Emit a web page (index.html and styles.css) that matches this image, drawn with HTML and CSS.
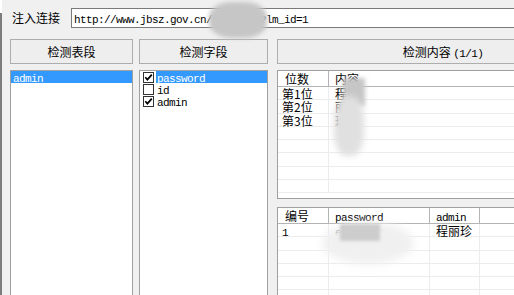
FILE: index.html
```html
<!DOCTYPE html>
<html lang="zh-CN">
<head>
    <meta charset="UTF-8">
    <meta name="viewport" content="width=device-width, initial-scale=1.0">
    <title>注入检测</title>
    <link rel="stylesheet" href="styles.css">
</head>
<body>
    <div class="frame">
        <div class="edge">
            <div class="edge-top"></div>
            <div class="edge-body"></div>
        </div>
        <div class="main">
            <div class="url-row">
                <label class="url-label">注入连接</label>
                <div class="url-box"><span class="en">http://www.jbsz.gov.cn/read.asp?lm_id=1</span></div>
            </div>
            <div class="panels">
                <div class="col col-table">
                    <div class="btn">检测表段</div>
                    <div class="listbox">
                        <div class="item sel"><span class="en">admin</span></div>
                    </div>
                </div>
                <div class="col col-field">
                    <div class="btn">检测字段</div>
                    <div class="listbox">
                        <div class="check-item">
                            <svg class="chk" width="11" height="11" viewBox="0 0 11 11"><rect x="0.5" y="0.5" width="10" height="10" fill="#fff" stroke="#333"/><path d="M2.3 5.2 L4.4 7.6 L8.8 2.6" fill="none" stroke="#000" stroke-width="1.7"/></svg>
                            <span class="item-text sel"><span class="en">password</span></span>
                        </div>
                        <div class="check-item">
                            <svg class="chk" width="11" height="11" viewBox="0 0 11 11"><rect x="0.5" y="0.5" width="10" height="10" fill="#fff" stroke="#333"/></svg>
                            <span class="item-text"><span class="en">id</span></span>
                        </div>
                        <div class="check-item">
                            <svg class="chk" width="11" height="11" viewBox="0 0 11 11"><rect x="0.5" y="0.5" width="10" height="10" fill="#fff" stroke="#333"/><path d="M2.3 5.2 L4.4 7.6 L8.8 2.6" fill="none" stroke="#000" stroke-width="1.7"/></svg>
                            <span class="item-text"><span class="en">admin</span></span>
                        </div>
                    </div>
                </div>
                <div class="col col-content">
                    <div class="btn">检测内容 <span class="en">(1/1)</span></div>
                    <div class="listview lv-top">
                        <div class="lv-head">
                            <div class="hc w1">位数</div>
                            <div class="hc wide">内容</div>
                        </div>
                        <div class="lv-row"><div class="cell w1 first">第1位</div><div class="cell wide">程</div></div>
                        <div class="lv-row"><div class="cell w1 first">第2位</div><div class="cell wide">丽</div></div>
                        <div class="lv-row"><div class="cell w1 first">第3位</div><div class="cell wide">珍</div></div>
                        <div class="lv-row"><div class="cell w1"></div><div class="cell wide"></div></div>
                        <div class="lv-row"><div class="cell w1"></div><div class="cell wide"></div></div>
                        <div class="lv-row"><div class="cell w1"></div><div class="cell wide"></div></div>
                        <div class="lv-row"><div class="cell w1"></div><div class="cell wide"></div></div>
                        <div class="lv-row"><div class="cell w1"></div><div class="cell wide"></div></div>
                    </div>
                    <div class="listview lv-bottom">
                        <div class="lv-head">
                            <div class="hc w1">编号</div>
                            <div class="hc w2"><span class="en">password</span></div>
                            <div class="hc w3"><span class="en">admin</span></div>
                            <div class="hc wide"></div>
                        </div>
                        <div class="lv-row"><div class="cell w1 first"><span class="en">1</span></div><div class="cell w2"><span class="en">e10adc39</span></div><div class="cell w3">程丽珍</div><div class="cell wide"></div></div>
                        <div class="lv-row"><div class="cell w1"></div><div class="cell w2"></div><div class="cell w3"></div><div class="cell wide"></div></div>
                        <div class="lv-row"><div class="cell w1"></div><div class="cell w2"></div><div class="cell w3"></div><div class="cell wide"></div></div>
                        <div class="lv-row"><div class="cell w1"></div><div class="cell w2"></div><div class="cell w3"></div><div class="cell wide"></div></div>
                        <div class="lv-row"><div class="cell w1"></div><div class="cell w2"></div><div class="cell w3"></div><div class="cell wide"></div></div>
                        <div class="lv-row"><div class="cell w1"></div><div class="cell w2"></div><div class="cell w3"></div><div class="cell wide"></div></div>
                    </div>
                </div>
            </div>
        </div>
    </div>
    <!-- blurred patches laid over private values -->
    <div class="smudge smudge-url"></div>
    <div class="smudge smudge-top-a"></div>
    <div class="smudge smudge-top-b"></div>
    <div class="smudge smudge-pw"></div>
    <div class="smudge smudge-pw-core"></div>
</body>
</html>
```

FILE: styles.css
```css
html, body {
    margin: 0;
    padding: 0;
}
body {
    position: relative;
    width: 514px;
    height: 295px;
    overflow: hidden;
    background: #f0f0f0;
    color: #000;
    font-family: "Noto Sans CJK SC", sans-serif;
    font-size: 12px;
}
.en {
    font-family: "Liberation Mono", monospace;
    font-size: 11px;
    letter-spacing: -0.6px;
}
.frame {
    display: flex;
    height: 300px;
}
.edge {
    width: 2px;
    flex: none;
    display: flex;
    flex-direction: column;
}
.edge-top {
    height: 13px;
    background: #fff;
}
.edge-body {
    flex: 1;
    background: #7d7d7d;
}
.main {
    flex: 1;
    min-width: 0;
    display: flex;
    flex-direction: column;
    padding: 8px 0 0 8px;
}

/* url line */
.url-row {
    display: flex;
    align-items: center;
    height: 20px;
}
.url-label {
    width: 61px;
    flex: none;
    box-sizing: border-box;
    padding-left: 2px;
    line-height: 20px;
}
.url-box {
    flex: none;
    width: 600px;
    height: 20px;
    box-sizing: border-box;
    border: 1px solid #7a7a7a;
    background: #fff;
    padding-left: 2px;
    line-height: 18px;
    white-space: nowrap;
}

/* three columns */
.panels {
    flex: 1;
    display: flex;
    margin-top: 11px;
    min-height: 0;
}
.col {
    display: flex;
    flex-direction: column;
    flex: none;
}
.col-table {
    width: 123px;
    margin-right: 6px;
}
.col-field {
    width: 129px;
    margin-right: 9px;
}
.col-content {
    width: 332px;
}
.btn {
    height: 25px;
    box-sizing: border-box;
    border: 1px solid #adadad;
    background: #eeeeee;
    text-align: center;
    line-height: 23px;
    white-space: nowrap;
}
.listbox {
    flex: 1;
    margin-top: 6px;
    border: 1px solid #a0a0a0;
    background: #fff;
}
.item {
    height: 12px;
    line-height: 12px;
    padding-left: 2px;
}
.sel {
    background: #3399ff;
    color: #fff;
}
.check-item {
    display: flex;
    height: 12px;
    line-height: 12px;
}
.chk {
    flex: none;
    margin: 1px 2px 0 3px;
}
.item-text {
    flex: 1;
    padding-left: 1px;
}

/* list views */
.listview {
    margin-top: 6px;
    box-sizing: border-box;
    border: 1px solid #a0a0a0;
    border-right: none;
    background: #fff;
    overflow: hidden;
}
.lv-top {
    height: 129px;
}
.lv-bottom {
    flex: 1;
    margin-top: 8px;
}
.lv-head {
    display: flex;
    height: 16px;
    box-sizing: border-box;
    border-bottom: 1px solid #b4b4b4;
}
.hc {
    box-sizing: border-box;
    border-right: 1px solid #b4b4b4;
    padding-left: 6px;
    line-height: 15px;
    white-space: nowrap;
}
.hc.w1 {
    padding-left: 7px;
}
.lv-row {
    display: flex;
    height: 13.3px;
    box-sizing: border-box;
    border-bottom: 1px solid #ececec;
}
.cell {
    box-sizing: border-box;
    border-right: 1px solid #ececec;
    padding-left: 6px;
    line-height: 13px;
    white-space: nowrap;
}
.cell.first {
    padding-left: 4px;
}
.w1 {
    width: 51px;
    flex: none;
}
.w2 {
    width: 101px;
    flex: none;
}
.w3 {
    width: 50px;
    flex: none;
}
.wide {
    flex: 1;
    border-right: none;
}

/* blurred patches */
.smudge {
    position: absolute;
}
.smudge-url {
    left: 209px;
    top: 2px;
    width: 58px;
    height: 36px;
    background: #c6c6c6;
    border-radius: 40%;
    filter: blur(2px);
}
.smudge-top-a {
    left: 343px;
    top: 78px;
    width: 22px;
    height: 28px;
    background: #c6c6c6;
    filter: blur(2px);
}
.smudge-top-b {
    left: 334px;
    top: 96px;
    width: 30px;
    height: 60px;
    background: #e0e0e0;
    border-radius: 40%;
    filter: blur(3px);
}
.smudge-pw {
    left: 322px;
    top: 222px;
    width: 92px;
    height: 42px;
    background: #f0f0f0;
    border-radius: 50%;
    filter: blur(4px);
}
.smudge-pw-core {
    left: 340px;
    top: 224px;
    width: 40px;
    height: 17px;
    background: #cdcdcd;
    filter: blur(1.5px);
}
```
